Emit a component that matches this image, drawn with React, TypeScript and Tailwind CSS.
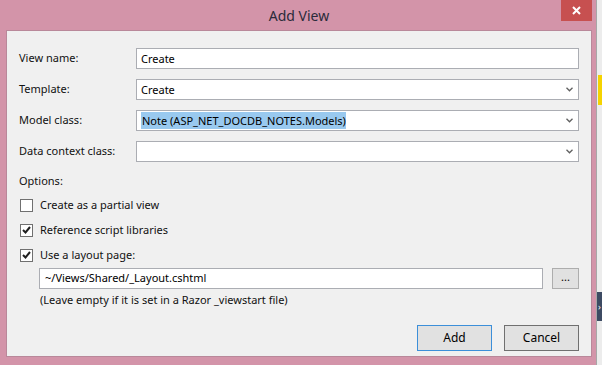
import React from 'react'

const font = { fontFamily: '"Segoe UI", "Noto Sans", sans-serif' }

function Chevron() {
  return (
    <svg width="7" height="5" viewBox="0 0 7 5" className="shrink-0">
      <path d="M0.5 0.8 L3.5 3.8 L6.5 0.8" fill="none" stroke="#606060" strokeWidth="1.3" />
    </svg>
  )
}

function Field({ value, select, selected }: { value: string; select?: boolean; selected?: boolean }) {
  return (
    <div className="flex h-[21px] flex-1 items-center border border-[#abadb3] bg-white pl-[4px] pr-[5px]">
      <div className="flex-1 leading-[15px] text-black">
        {selected ? <span className="bg-[#99c9ef] py-[1px] pl-[1px]">{value}</span> : value}
      </div>
      {select && <Chevron />}
    </div>
  )
}

function Row({ label, children }: { label: string; children: React.ReactNode }) {
  return (
    <div className="flex h-[21px] items-center">
      <div className="w-[117px] text-[#111]">{label}</div>
      {children}
    </div>
  )
}

function Check({ checked, label }: { checked?: boolean; label: string }) {
  return (
    <div className="flex h-[16px] items-center">
      <div className="ml-[1px] flex h-[13px] w-[13px] items-center justify-center border border-[#707070] bg-white">
        {checked && (
          <svg width="9" height="8" viewBox="0 0 9 8">
            <path d="M1 4 L3.5 6.5 L8 1" fill="none" stroke="#202020" strokeWidth="2" />
          </svg>
        )}
      </div>
      <span className="ml-[7px] text-[#111]">{label}</span>
    </div>
  )
}

export default function App() {
  return (
    <div className="flex h-[365px] w-[602px] overflow-hidden text-[11px]" style={font}>
      <div className="flex w-[596px] flex-col bg-[#d394a9] pb-[8px] pl-[6px] pr-[4px]">
        <div className="relative flex h-[30px] items-center justify-center">
          <span className="text-[14px] text-[#2b2b3a]">Add View</span>
          <div className="absolute top-0 right-0 flex h-[21px] w-[31px] items-center justify-center bg-[#c75050]">
            <svg width="9" height="9" viewBox="0 0 9 9">
              <path d="M1 1 L8 8 M8 1 L1 8" stroke="white" strokeWidth="2" />
            </svg>
          </div>
        </div>
        <div className="flex flex-1 flex-col border border-[#b9889a] bg-[#f0f0f0] pt-[17px] pr-[12px] pl-[12px]">
          <div className="flex flex-col gap-[10px]">
            <Row label="View name:">
              <Field value="Create" />
            </Row>
            <Row label="Template:">
              <Field value="Create" select />
            </Row>
            <Row label="Model class:">
              <Field value="Note (ASP_NET_DOCDB_NOTES.Models)" select selected />
            </Row>
            <Row label="Data context class:">
              <Field value="" select />
            </Row>
          </div>
          <div className="mt-[11px] h-[16px] leading-[16px] text-[#111]">Options:</div>
          <div className="mt-[8px] flex flex-col gap-[9px]">
            <Check label="Create as a partial view" />
            <Check checked label="Reference script libraries" />
            <Check checked label="Use a layout page:" />
          </div>
          <div className="mt-[5px] ml-[20px] flex items-center">
            <div className="flex h-[21px] w-[504px] items-center border border-[#abadb3] bg-white pl-[5px] text-black">
              ~/Views/Shared/_Layout.cshtml
            </div>
            <div className="ml-[9px] flex h-[21px] flex-1 items-end justify-center border border-[#adadad] bg-[#e1e1e1] pb-[3px] text-black">
              ...
            </div>
          </div>
          <div className="mt-[3px] ml-[21px] leading-[16px] text-[#111]">
            (Leave empty if it is set in a Razor _viewstart file)
          </div>
          <div className="mt-[17px] flex justify-end gap-[12px]">
            <div className="flex h-[26px] w-[75px] items-center justify-center border border-[#3c8fd9] bg-[#e1e1e1] text-[12px] text-black">
              Add
            </div>
            <div className="flex h-[26px] w-[75px] items-center justify-center border border-[#707070] bg-[#e1e1e1] text-[12px] text-black">
              Cancel
            </div>
          </div>
        </div>
      </div>
      <div className="w-[1px] bg-[#a7a7a7]" />
      <div className="flex flex-1 flex-col bg-[#ececec]">
        <div className="mt-[75px] ml-[1px] h-[30px] bg-[#f5d300]" />
        <div className="mt-[187px] flex h-[29px] items-center bg-[#3d4b63] pl-[1px] text-[9px] text-white">›</div>
      </div>
    </div>
  )
}
